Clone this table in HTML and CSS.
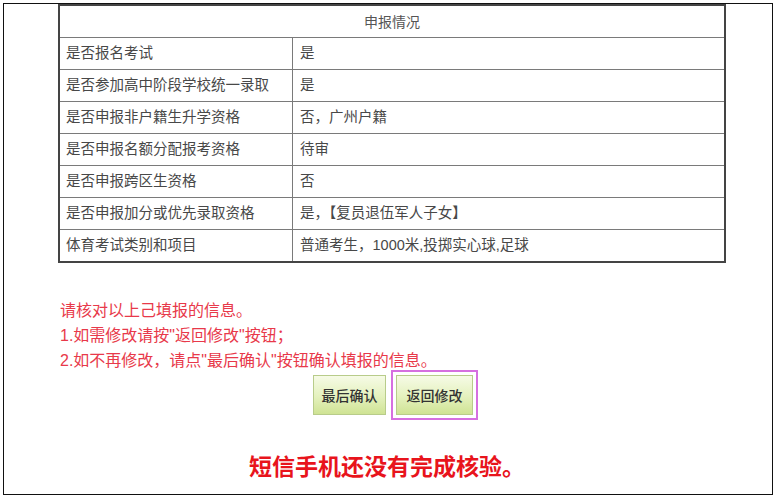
FILE: index.html
```html
<!DOCTYPE html>
<html lang="zh-CN">
<head>
<meta charset="utf-8">
<title>申报情况</title>
<link rel="stylesheet" href="styles.css">
</head>
<body>
<div class="frame">
  <div class="content">
    <table class="info">
      <tr><th colspan="2">申报情况</th></tr>
      <tr><td class="label">是否报名考试</td><td>是</td></tr>
      <tr><td class="label">是否参加高中阶段学校统一录取</td><td>是</td></tr>
      <tr><td class="label">是否申报非户籍生升学资格</td><td>否，广州户籍</td></tr>
      <tr><td class="label">是否申报名额分配报考资格</td><td>待审</td></tr>
      <tr><td class="label">是否申报跨区生资格</td><td>否</td></tr>
      <tr><td class="label">是否申报加分或优先录取资格</td><td>是，【复员退伍军人子女】</td></tr>
      <tr><td class="label">体育考试类别和项目</td><td>普通考生，1000米,投掷实心球,足球</td></tr>
    </table>
    <div class="notice">
      <p>请核对以上己填报的信息。</p>
      <p>1.如需修改请按"返回修改"按钮；</p>
      <p>2.如不再修改，请点"最后确认"按钮确认填报的信息。</p>
    </div>
    <div class="actions">
      <button class="btn">最后确认</button>
      <button class="btn btn-marked">返回修改</button>
    </div>
    <div class="warning">短信手机还没有完成核验。</div>
  </div>
</div>
</body>
</html>
```
FILE: styles.css
```css
html, body {
  margin: 0;
  padding: 0;
  background: #fff;
}
body {
  font-family: "Liberation Sans", "Noto Sans CJK SC", sans-serif;
}
.frame {
  margin: 3px 0 0 3px;
  width: 768px;
  height: 490px;
  border: 1px solid #111;
}
.content {
  margin-left: 54px;
  width: 668px;
}
.info {
  border-collapse: collapse;
  width: 668px;
  border: 2px solid #444;
  color: #484848;
  font-size: 14.5px;
  font-family: "Liberation Sans", "Noto Sans CJK SC", sans-serif;
  font-weight: 400;
}
.info th, .info td {
  border: 1px solid #7a7a7a;
  height: 31px;
  padding: 0 7px;
  text-align: left;
  line-height: 1;
}
.info th {
  font-weight: 400;
  text-align: center;
  color: #555;
  font-size: 14px;
}
.info td.label {
  width: 219px;
  padding-left: 6px;
}
.notice {
  margin-top: 35px;
  padding-left: 2px;
  color: #e8394a;
  font-size: 16px;
}
.notice p {
  margin: 0;
  line-height: 25px;
}
.actions {
  display: flex;
  justify-content: center;
  gap: 10px;
  margin-top: 2px;
  padding-left: 2px;
}
.btn {
  height: 40px;
  width: 73px;
  border: 1px solid #b8cc8a;
  border-radius: 0;
  background: linear-gradient(#f6fbe6, #e4f1bd 55%, #cfe394);
  color: #333;
  font-size: 14px;
  font-weight: 500;
  font-family: "Noto Sans CJK SC", sans-serif;
  padding: 0;
}
.btn-marked {
  width: 77px;
  outline: 2px solid #d66fe0;
  outline-offset: 3px;
}
.warning {
  margin-top: 33px;
  text-align: center;
  padding-right: 10px;
  color: #e8141c;
  font-size: 23px;
  font-weight: 700;
  font-family: "Noto Sans CJK SC", sans-serif;
}
```
